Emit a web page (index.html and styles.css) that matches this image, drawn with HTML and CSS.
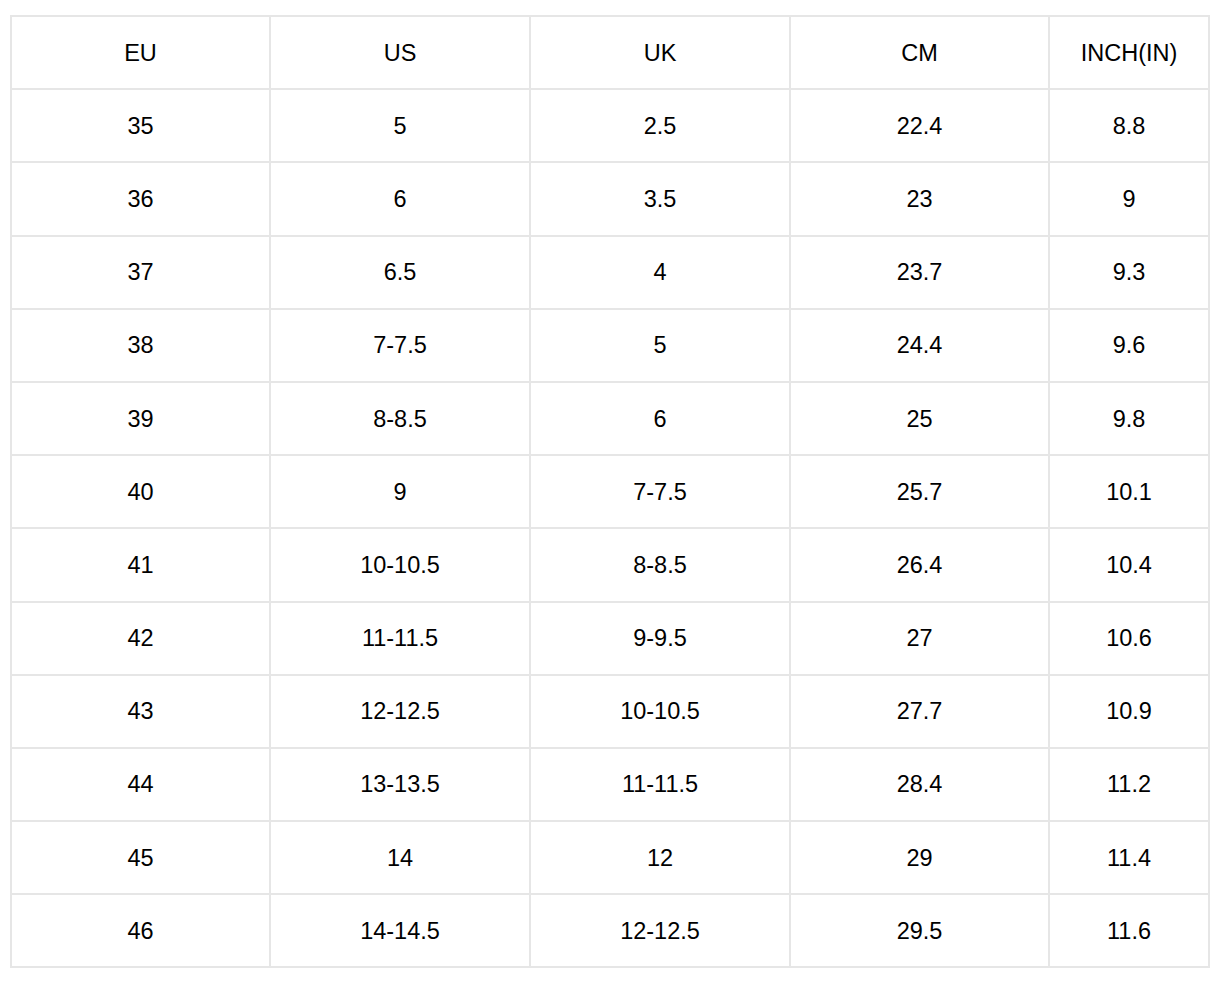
FILE: index.html
```html
<!DOCTYPE html>
<html lang="en">
<head>
<meta charset="utf-8">
<title>Size Chart</title>
<link rel="stylesheet" href="styles.css">
</head>
<body>
<div class="sheet">
<table class="size-table">
<colgroup>
<col class="c-eu"><col class="c-us"><col class="c-uk"><col class="c-cm"><col class="c-in">
</colgroup>
<tbody>
<tr><td>EU</td><td>US</td><td>UK</td><td>CM</td><td>INCH(IN)</td></tr>
<tr><td>35</td><td>5</td><td>2.5</td><td>22.4</td><td>8.8</td></tr>
<tr><td>36</td><td>6</td><td>3.5</td><td>23</td><td>9</td></tr>
<tr><td>37</td><td>6.5</td><td>4</td><td>23.7</td><td>9.3</td></tr>
<tr><td>38</td><td>7-7.5</td><td>5</td><td>24.4</td><td>9.6</td></tr>
<tr><td>39</td><td>8-8.5</td><td>6</td><td>25</td><td>9.8</td></tr>
<tr><td>40</td><td>9</td><td>7-7.5</td><td>25.7</td><td>10.1</td></tr>
<tr><td>41</td><td>10-10.5</td><td>8-8.5</td><td>26.4</td><td>10.4</td></tr>
<tr><td>42</td><td>11-11.5</td><td>9-9.5</td><td>27</td><td>10.6</td></tr>
<tr><td>43</td><td>12-12.5</td><td>10-10.5</td><td>27.7</td><td>10.9</td></tr>
<tr><td>44</td><td>13-13.5</td><td>11-11.5</td><td>28.4</td><td>11.2</td></tr>
<tr><td>45</td><td>14</td><td>12</td><td>29</td><td>11.4</td></tr>
<tr><td>46</td><td>14-14.5</td><td>12-12.5</td><td>29.5</td><td>11.6</td></tr>
</tbody>
</table>
</div>
</body>
</html>
```
FILE: styles.css
```css
html, body {
  margin: 0;
  padding: 0;
  background: #ffffff;
}
.sheet {
  padding: 15px 0 0 10px;
}
.size-table {
  border-collapse: collapse;
  table-layout: fixed;
  width: 1198px;
  font-family: "Liberation Sans", Arial, sans-serif;
  font-size: 23.5px;
  color: #000000;
}
.c-eu { width: 259px; }
.c-us, .c-uk { width: 260px; }
.c-cm { width: 259px; }
.c-in { width: 160px; }
.size-table td {
  border: 2px solid #e6e6e6;
  height: 73.2px;
  padding: 1px 0 0 0;
  text-align: center;
  vertical-align: middle;
  box-sizing: border-box;
}
```
